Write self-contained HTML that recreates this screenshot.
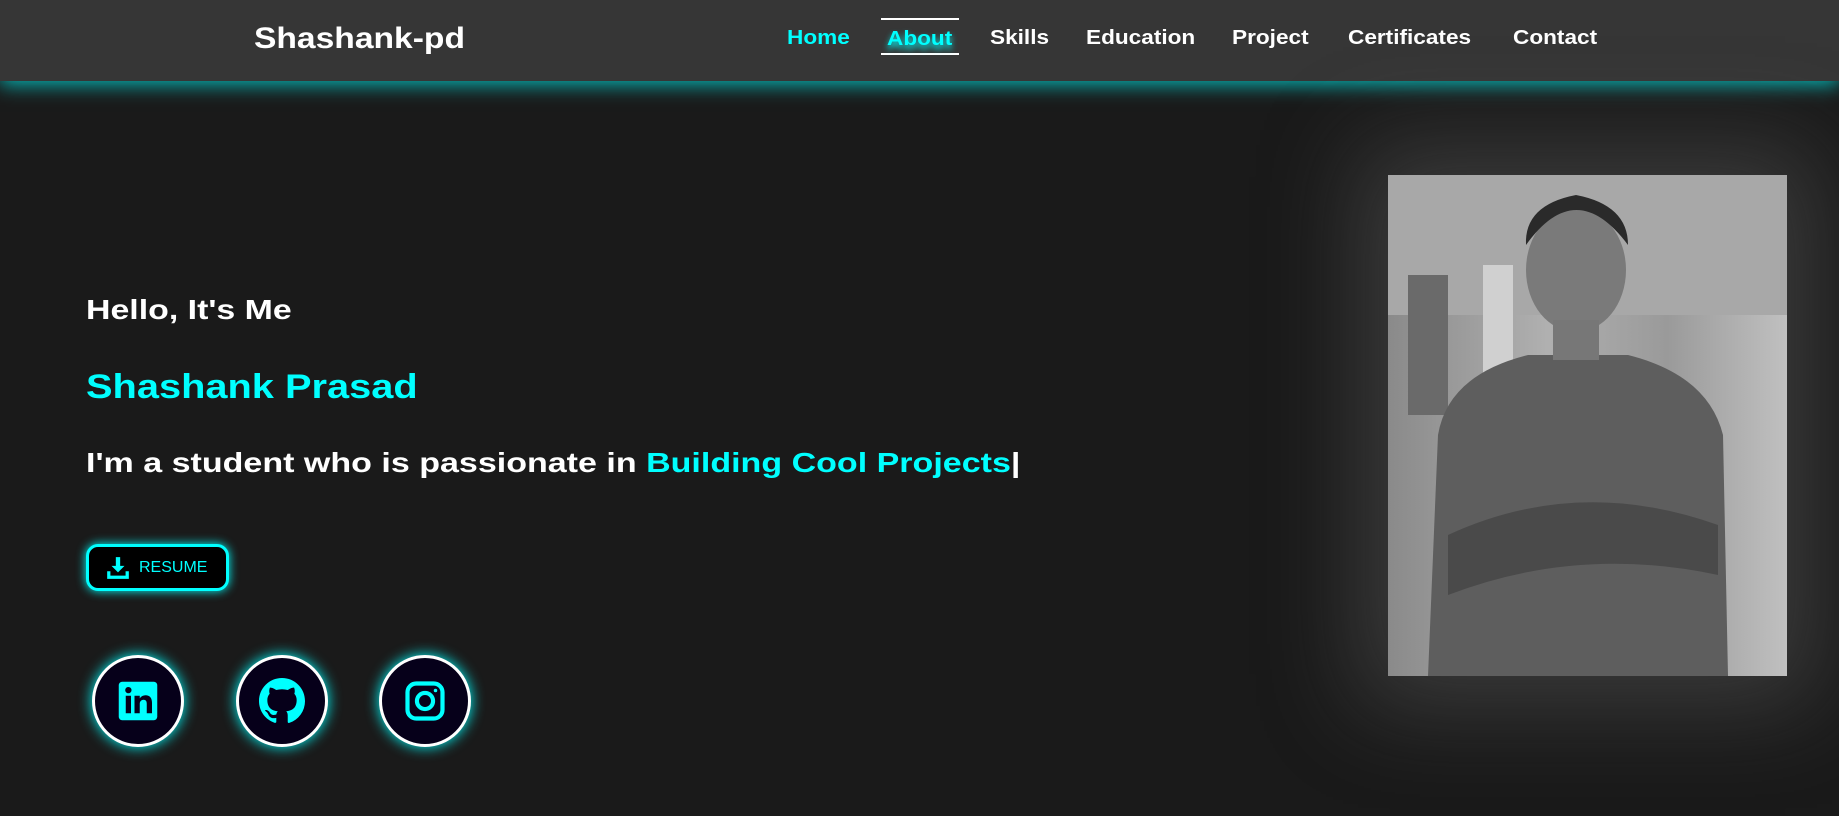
<!DOCTYPE html>
<html><head><meta charset="utf-8"><style>
*{margin:0;padding:0;box-sizing:border-box}
body{width:1839px;height:816px;background:#1a1a1a;font-family:"Liberation Sans",sans-serif;overflow:hidden;position:relative;color:#fff}
.nav{position:absolute;left:0;top:0;width:1839px;height:81px;background:#363636;box-shadow:0 4px 18px rgba(0,230,230,.75)}
.logo{position:absolute;left:254px;top:22px;font-size:30px;font-weight:bold;transform:scaleX(1.12);transform-origin:left}
.nav a{position:absolute;top:27px;font-size:20px;font-weight:bold;color:#fff;text-decoration:none;white-space:nowrap;transform:scaleX(1.13);transform-origin:left}
.about{border-top:2px solid #fff;border-bottom:2px solid #fff;height:37px;top:18px!important;padding:8px 6px 0;color:#0ff!important;text-shadow:0 4px 6px #0ff;transform:none!important}
.about span{display:inline-block;transform:scaleX(1.13);transform-origin:left}
.t{position:absolute;left:86px;font-weight:bold;white-space:nowrap;transform-origin:left}
.c{color:#0ff}
.btn{position:absolute;left:86px;top:544px;width:143px;height:47px;border:3px solid #0ff;border-radius:12px;background:#000;box-shadow:0 0 10px #0ff;color:#0ff;font-size:16px;display:flex;align-items:center;padding-left:16px;gap:8px}
.ci{position:absolute;top:655px;width:92px;height:92px;border-radius:50%;border:3px solid #fff;background:#06001a;box-shadow:0 0 14px #0ff;display:flex;align-items:center;justify-content:center}
.photo{position:absolute;left:1388px;top:175px;width:399px;height:501px;box-shadow:0 0 90px 30px rgba(120,120,120,.35);background:linear-gradient(90deg,#8a8a8a,#b0b0b0 40%,#9a9a9a 70%,#c0c0c0);overflow:hidden}
</style></head><body>
<div class="nav">
<div class="logo">Shashank-pd</div>
<a style="left:787px;color:#0ff">Home</a>
<a class="about" style="left:881px;width:78px"><span>About</span></a>
<a style="left:990px">Skills</a>
<a style="left:1086px">Education</a>
<a style="left:1232px">Project</a>
<a style="left:1348px">Certificates</a>
<a style="left:1513px">Contact</a>
</div>
<div class="t" style="top:294px;font-size:28px;transform:scaleX(1.21)">Hello, It's Me</div>
<div class="t c" style="top:368px;font-size:34px;transform:scaleX(1.17)">Shashank Prasad</div>
<div class="t" style="top:447px;font-size:28px;transform:scaleX(1.215)">I'm a student who is passionate in <span class="c">Building Cool Projects</span>|</div>
<div class="btn"><svg width="26" height="26" viewBox="0 0 24 24" fill="#0ff"><path d="M10 2h4v8h4l-6 6-6-6h4z"/><path d="M2 15h3v4h14v-4h3v7H2z"/></svg>RESUME</div>
<div class="ci" style="left:92px"><svg width="42" height="42" viewBox="0 0 24 24"><rect x="1" y="1" width="22" height="22" rx="2" fill="#0ff"/><rect x="5" y="9" width="3" height="10" fill="#06001a"/><circle cx="6.5" cy="5.8" r="1.8" fill="#06001a"/><path d="M10 9h3v1.5c.8-1.2 2-1.8 3.3-1.8 2.3 0 3.7 1.4 3.7 4.3V19h-3v-5.5c0-1.4-.6-2.2-1.8-2.2S13 12.2 13 13.6V19h-3z" fill="#06001a"/></svg></div>
<div class="ci" style="left:236px"><svg width="46" height="46" viewBox="0 0 16 16" fill="#0ff"><path d="M8 0C3.58 0 0 3.58 0 8c0 3.54 2.29 6.530 5.47 7.59.4.07.55-.17.55-.38v-1.330c-2.23.48-2.7-1.07-2.7-1.07-.36-.92-.89-1.17-.89-1.17-.73-.5.06-.49.06-.49.8.06 1.23.83 1.23.83.71 1.22 1.870.87 2.330.66.07-.52.28-.87.5-1.07-1.78-.2-3.65-.89-3.65-3.95 0-.87.31-1.59.82-2.15-.08-.2-.36-1.02.08-2.12 0 0 .67-.21 2.2.82a7.6 7.6 0 014 0c1.53-1.04 2.2-.82 2.2-.82.44 1.1.16 1.92.08 2.12.51.56.82 1.27.82 2.15 0 3.07-1.87 3.75-3.65 3.95.29.25.54.73.54 1.48v2.2c0 .21.15.46.55.38A8 8 0 0016 8c0-4.420-3.58-8-8-8z"/></svg></div>
<div class="ci" style="left:379px"><svg width="42" height="42" viewBox="0 0 24 24" fill="none" stroke="#0ff" stroke-width="2.4"><rect x="2" y="2" width="20" height="20" rx="5"/><circle cx="12" cy="12" r="4.6"/><circle cx="18" cy="6" r="1" fill="#0ff" stroke="none"/></svg></div>
<div class="photo">
<svg width="399" height="501" viewBox="0 0 399 501">
<rect x="0" y="0" width="399" height="140" fill="#a8a8a8"/>
<rect x="20" y="100" width="40" height="140" fill="#6a6a6a"/>
<rect x="95" y="90" width="30" height="120" fill="#d0d0d0"/>
<path d="M40 501 L50 260 Q60 200 140 180 L240 180 Q320 200 335 260 L340 501Z" fill="#5e5e5e"/>
<path d="M60 360 Q190 300 330 350 L330 400 Q190 370 60 420Z" fill="#4a4a4a"/>
<ellipse cx="188" cy="95" rx="50" ry="62" fill="#7a7a7a"/>
<path d="M138 70 Q188 0 240 70 Q240 30 188 20 Q136 30 138 70Z" fill="#2a2a2a"/>
<rect x="165" y="145" width="46" height="40" fill="#777"/>
</svg>
</div>
</body></html>
